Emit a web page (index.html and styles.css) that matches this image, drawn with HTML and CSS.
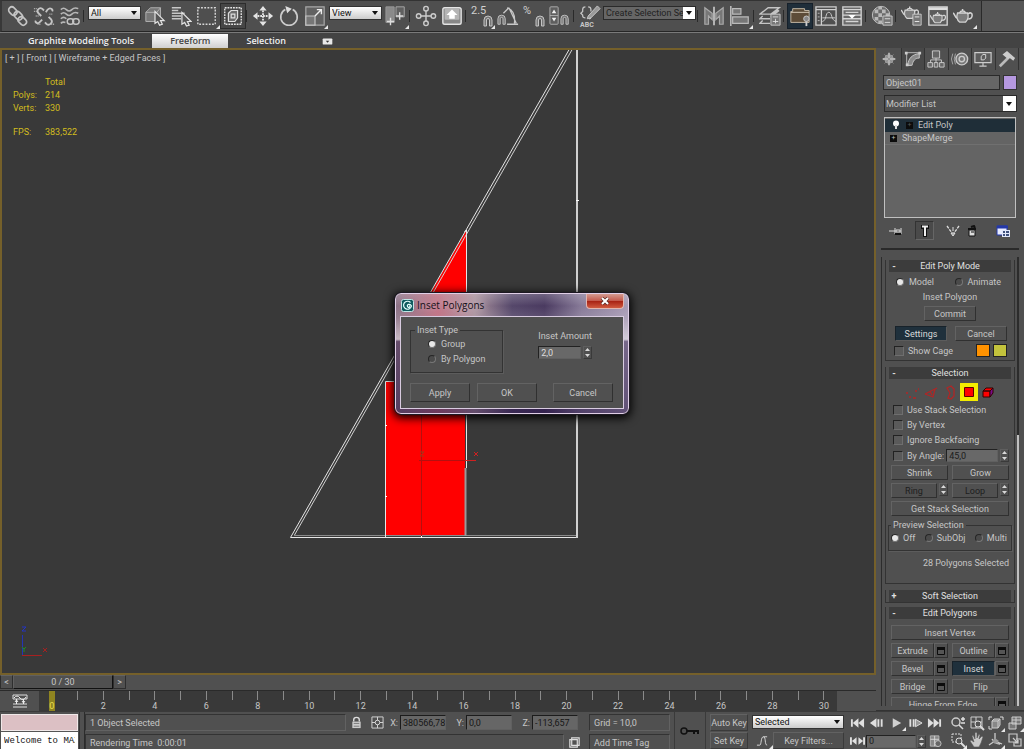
FILE: index.html
```html
<!DOCTYPE html>
<html lang="en">
<head>
    <meta charset="UTF-8">
    <meta name="viewport" content="width=device-width, initial-scale=1.0">
    <title>Inset Polygons</title>
    <link rel="stylesheet" href="styles.css">
</head>
<body>
    <!-- shared icons -->
    <svg class="defs" aria-hidden="true">
        <symbol id="spin" viewBox="0 0 7 11"><path d="M3.500 1 6 4H1zM3.500 10 6 7H1z" fill="#d8d8d8"/></symbol>
        <symbol id="win" viewBox="0 0 10 10"><path d="M1.500 1.500h7v7h-7z" fill="#555" stroke="#0c0c0c"/><path d="M1 1h8v3H1z" fill="#0c0c0c"/></symbol>
        <symbol id="magnet" viewBox="0 0 10 12"><path d="M1 11V5a4 4 0 0 1 8 0v6H6.500V5a1.500 1.500 0 0 0-3 0v6z" fill="#777" stroke="#c4c4c4"/></symbol>
        <symbol id="teapot" viewBox="0 0 20 14"><path d="M4.500 4h10c1 3 1 6-2 9h-6C4 11 3.500 7 4.500 4z" fill="#7c7c7c" stroke="#d4d4d4" stroke-width="1.300"/><path d="M4 9C2 9 2 5 0 4M15 10c3 0 4-2 4-4s-2-3-4-1M6.500 4c1-2.500 5-2.500 6 0M9.500 0v2" fill="none" stroke="#d4d4d4" stroke-width="1.500"/></symbol>
    </svg>

    <div class="app">
        <div class="toolbar">
            <button class="tool" aria-label="Link"><svg viewBox="0 0 24 24"><g fill="none" stroke="#c4c4c4" stroke-width="1.800"><rect x="1" y="3" width="10" height="7" rx="3.500" transform="rotate(45 6 7)"/><rect x="7" y="8" width="10" height="7" rx="3.500" transform="rotate(45 12 12)"/><rect x="12" y="14" width="10" height="7" rx="3.500" transform="rotate(45 17 17)"/></g></svg></button>
            <button class="tool" aria-label="Unlink"><svg viewBox="0 0 24 24"><path d="M12 6l-2-2C7 2 3 6 6 9l3 3M13 19l2 2c3 2 7-2 5-5l-3-3M14 8l2-3c3-3 6 0 5 2M10 16l-3 3c-2 2-5 0-4-2" fill="none" stroke="#c4c4c4" stroke-width="2"/><path d="M1 4h4M1 7h4M3 12h4M18 10h4M5 21h3M20 21h3" stroke="#bbb" stroke-width="1.500" stroke-dasharray="1 1"/></svg></button>
            <button class="tool" aria-label="Bind to Space Warp"><svg viewBox="0 0 24 24"><path d="M2 5q3-3 6 0t6 0t7-1M2 10q3-3 6 0t6 0t7-1M2 15q3-3 6 0M2 20q2-2 5-1" fill="none" stroke="#b8b8b8" stroke-width="1.700"/><g fill="none" stroke="#c4c4c4" stroke-width="1.600"><rect x="9" y="15" width="7" height="6" rx="3"/><rect x="15" y="15" width="7" height="6" rx="3"/></g></svg></button>
            <span class="sep"></span>
            <select class="drop" aria-label="Selection filter"><option>All</option></select>
            <button class="tool" aria-label="Select Object"><svg viewBox="0 0 24 24"><path d="M2 8l5-5h11v10l-4 5H2zM2 8h12v10M14 8l4-5" fill="#777" stroke="#b4b4b4"/><path d="M12 7v13l3-2 2 4 3-1-2-4h4z" fill="#555" stroke="#e4e4e4" stroke-width="1.300"/></svg></button>
            <button class="tool" aria-label="Select by Name"><svg viewBox="0 0 24 24"><path d="M2 3h10M2 6h7M2 9h14M2 12h10M2 15h10" stroke="#c8c8c8" stroke-width="1.600"/><path d="M13 8v13l3-2 2 4 3-1-2-4h4z" fill="#555" stroke="#e4e4e4" stroke-width="1.300"/></svg></button>
            <button class="tool fly" aria-label="Rectangular Selection Region"><svg viewBox="0 0 24 24"><path d="M2 3h19v18H2z" fill="none" stroke="#d8d8d8" stroke-width="1.500" stroke-dasharray="2 1.500"/></svg></button>
            <button class="tool pressed" aria-label="Window Crossing"><svg viewBox="0 0 24 24"><path d="M3 3h18v18H3z" fill="none" stroke="#e4e4e4" stroke-width="1.500" stroke-dasharray="2 1"/><path d="M7 9l3-3h7v8l-3 4H7zM10 10h4v4h-4z" fill="#6b6b6b" stroke="#ddd" stroke-width="1.300"/></svg></button>
            <span class="sep"></span>
            <button class="tool" aria-label="Move"><svg viewBox="0 0 24 24"><path d="M12 1l4 5H8zM12 23l4-5H8zM1 12l5-4v8zM23 12l-5-4v8z" fill="#e4e4e4"/><path d="M12 6v12M6 12h12" stroke="#e4e4e4" stroke-width="2" stroke-dasharray="2 1"/></svg></button>
            <button class="tool" aria-label="Rotate"><svg viewBox="0 0 24 24"><path d="M8 5a9 9 0 1 0 8 0" fill="none" stroke="#ccc" stroke-width="1.800"/><path d="M8 1l7 3-5 5z" fill="#ddd"/></svg></button>
            <button class="tool fly" aria-label="Scale"><svg viewBox="0 0 24 24"><path d="M2 2h20v20H2z" fill="#626262" stroke="#a8a8a8" stroke-width="1.300"/><path d="M2 12h10v10H2z" fill="#777" stroke="#c4c4c4" stroke-width="1.300"/><path d="M12 12l7-7M14 5h5v5" fill="none" stroke="#eee" stroke-width="1.500"/></svg></button>
            <select class="drop" aria-label="Reference coordinate system"><option>View</option></select>
            <button class="tool fly" aria-label="Use Pivot Point Center"><svg viewBox="0 0 24 24"><path d="M1 2h9v17H1z" fill="#8a8a8a" stroke="#999"/><path d="M12 2h9v11h-9z" fill="#606060" stroke="#aaa"/><path d="M6 14v8M2 18h8M16 8v8M12 12h8" stroke="#ddd" stroke-width="1.500"/></svg></button>
            <span class="sep"></span>
            <button class="tool" aria-label="Select and Manipulate"><svg viewBox="0 0 24 24"><path d="M12 5v14M5 12h14" stroke="#ccc" stroke-width="1.500"/><g fill="#555" stroke="#ccc" stroke-width="1.500"><circle cx="12" cy="4" r="2.500"/><circle cx="12" cy="20" r="2.500"/><circle cx="4" cy="12" r="2.500"/><circle cx="20" cy="12" r="2.500"/></g></svg></button>
            <button class="tool" aria-label="Keyboard Shortcut Override"><svg viewBox="0 0 24 24"><rect x="2" y="3" width="20" height="18" rx="2" fill="#888" stroke="#e4e4e4" stroke-width="1.500"/><rect x="4" y="4" width="16" height="12" rx="1" fill="#b4b4b4"/><path d="M12 5l6 6h-3v4H9v-4H6z" fill="#fff"/></svg></button>
            <span class="sep"></span>
            <button class="tool fly num" aria-label="Snaps Toggle"><span>2.5</span><svg class="mag"><use href="#magnet"/></svg></button>
            <button class="tool" aria-label="Angle Snap"><svg viewBox="0 0 24 24"><use href="#magnet" x="0" y="10" width="10" height="12"/><path d="M7 9l6-6M11 3c6 2 9 8 8 17M11 21h12M13 3l8 17" fill="none" stroke="#c8c8c8" stroke-width="1.400"/></svg></button>
            <button class="tool num" aria-label="Percent Snap"><span>%</span><svg class="mag"><use href="#magnet"/></svg></button>
            <button class="tool" aria-label="Spinner Snap"><svg viewBox="0 0 24 24"><rect x="1" y="2" width="9" height="19" rx="1" fill="#5e5e5e" stroke="#b0b0b0"/><path d="M5.500 5L8 9H3zM5.500 18L8 14H3z" fill="#eee"/><path d="M1 11.500h9" stroke="#b0b0b0"/><use href="#magnet" x="12" y="10" width="10" height="12"/></svg></button>
            <span class="sep"></span>
            <button class="tool sets" aria-label="Edit Named Selection Sets"><svg viewBox="0 0 24 24"><path d="M7 2q-3 0-3 3v2l-2 2 2 2v1q0 2 3 2M10 2q3 0 3 3v2M13 11v2q0 2-2 2" fill="none" stroke="#c4c4c4" stroke-width="1.400"/><path d="M10 12l10-11 3 3-10 10-4 1z" fill="#999" stroke="#ccc"/></svg><span>ABC</span></button>
            <div class="combo"><input type="text" value="Create Selection Set" aria-label="Named selection sets"><button aria-label="Open list"></button></div>
            <span class="sep"></span>
            <button class="tool" aria-label="Mirror"><svg viewBox="0 0 24 24"><path d="M12 2v20" stroke="#e4e4e4" stroke-width="1.500"/><path d="M2 3v18h4v-9l4 4v-7zM22 3v18h-4v-9l-4 4v-7z" fill="#777" stroke="#aaa" stroke-width="1.300"/></svg></button>
            <button class="tool fly" aria-label="Align"><svg viewBox="0 0 24 24"><path d="M2 1v22" stroke="#ccc" stroke-width="1.500"/><path d="M4 4h9v6H4zM4 13h17v7H4z" fill="#777" stroke="#bbb" stroke-width="1.300"/></svg></button>
            <span class="sep"></span>
            <button class="tool" aria-label="Layer Manager"><svg viewBox="0 0 24 24"><path d="M1 10l9-7h12l-9 7zM4 12l-3 3h11M4 17l-3 3h11M13 13l9-7M13 11l8-6" fill="none" stroke="#c4c4c4" stroke-width="1.500"/><path d="M13 10h10v12H13z" fill="#777" stroke="#ccc"/><path d="M15 13h6M15 18h6M18 15v5" stroke="#ddd"/></svg></button>
            <span class="sep"></span>
            <button class="tool lit" aria-label="Graphite Modeling Tools"><svg viewBox="0 0 24 24"><path d="M2 7h2V4h13v2h5v13H2z" fill="#5d4c38" stroke="#c8bcaa"/><path d="M2 8h20" stroke="#ddd2c0"/><circle cx="19" cy="15" r="3" fill="#888" stroke="#ccc"/><path d="M19 18v5" stroke="#ccc" stroke-width="2"/></svg></button>
            <button class="tool" aria-label="Curve Editor"><svg viewBox="0 0 24 24"><path d="M1 2h22v20H1zM1 5h22M7 5v17" fill="none" stroke="#d0d0d0" stroke-width="1.400"/><path d="M8 18c5-1 3-10 7-10s2 8 8 10M8 14h14" fill="none" stroke="#d0d0d0"/><path d="M3 9h2M3 13h2M3 17h2" stroke="#bbb"/></svg></button>
            <button class="tool" aria-label="Schematic View"><svg viewBox="0 0 24 24"><path d="M2 2h20v20H2z" fill="#6a6a6a" stroke="#d0d0d0" stroke-width="1.500"/><path d="M2 5h20M5 8h14M2 11h20M2 15h20M5 18h14" fill="none" stroke="#d4d4d4" stroke-width="1.500"/><path d="M8 11h8l-4 4z" fill="#fff"/></svg></button>
            <span class="sep"></span>
            <button class="tool" aria-label="Material Editor"><svg viewBox="0 0 24 24"><circle cx="11" cy="11" r="9.500" fill="#6a6a6a" stroke="#c8c8c8"/><path d="M4 5h4v4H4zM12 5h4v4h-4zM8 9h4v4H8zM16 9h4v4h-4zM4 13h4v4H4zM8 2h4v3H8zM8 17h4v3H8z" fill="#b8b8b8"/><path d="M13 12h10v10H13z" fill="#777" stroke="#ccc"/><path d="M15 15h6M15 19h6" stroke="#ddd"/></svg></button>
            <span class="sep"></span>
            <button class="tool" aria-label="Render Setup"><svg viewBox="0 0 24 24"><use href="#teapot" x="0" y="1" width="20" height="15"/><path d="M13 10h9v12h-9z" fill="#777" stroke="#ccc"/><path d="M15 13h5M15 18h5" stroke="#eee"/></svg></button>
            <button class="tool" aria-label="Rendered Frame Window"><svg viewBox="0 0 24 24"><path d="M2 2h20v20H2z" fill="#5c5c5c" stroke="#d4d4d4" stroke-width="1.500"/><path d="M2 4h20" stroke="#ddd" stroke-width="3"/><use href="#teapot" x="3" y="7" width="18" height="14"/></svg></button>
            <button class="tool fly" aria-label="Render"><svg viewBox="0 0 24 24"><use href="#teapot" x="0" y="4" width="22" height="16"/></svg></button>
            <span class="toolbar-end"></span>
        </div>

        <div class="ribbon">
            <button>Graphite Modeling Tools</button>
            <button class="active">Freeform</button>
            <button>Selection</button>
            <button class="mini" aria-label="Minimize ribbon"><svg viewBox="0 0 12 8"><rect x=".5" y=".5" width="11" height="7" rx="1" fill="#e8e8e8"/><path d="M4 3h4L6 5.500z" fill="#333"/></svg></button>
        </div>

        <div class="main">
            <div class="stage">
                <div class="viewport">
                    <svg class="scene" viewBox="0 48 876 627" preserveAspectRatio="xMinYMin slice">
                        <path d="M466 231V320H415z" fill="#f00"/>
                        <path d="M386 382h79v154h-79z" fill="#f00"/>
                        <g fill="none" stroke="#e6e6e6">
                            <path d="M570 48 290.500 537.500H578"/>
                            <path d="M573 48 294.500 535" stroke="#d0d0d0"/>
                            <path d="M294 535.500H577" stroke="#8a8a8a"/>
                            <path d="M577 48V538" stroke-width="2" stroke="#d0d0d0"/>
                            <path d="M466.500 230V468M385.500 537V381.500H400"/>
                            <path d="M465.500 468V536" stroke="#999" stroke-width="2"/>
                            <path d="M385 425.500h2M385 496.500h2M421.500 536v2M576 200.500h3M466.500 230l-2 2" stroke="#fff"/>
                        </g>
                        <path d="M421.500 382V536M419 460.500h46" stroke="#b51010" fill="none"/>
                        <path d="M465 460.500h11M474 452l4 4M478 452l-4 4" stroke="#d02020" fill="none"/>
                        <path d="M420 452h4l-4 4h4" stroke="#a33a1a" fill="none"/>
                        <path d="M22.500 635V655" stroke="#2434b4"/>
                        <path d="M22 627h4l-4 4h4" stroke="#2434c4" fill="none"/>
                        <path d="M22 655.500H42M43 648l4 4M47 648l-4 4" stroke="#a82020" fill="none"/>
                        <path d="M22 647l2 2 2-2M24 649v3" stroke="#209020" fill="none"/>
                    </svg>
                    <div class="view-label">[ + ] [ Front ] [ Wireframe + Edged Faces ]</div>
                    <table class="stats">
                        <tr><td></td><td>Total</td></tr>
                        <tr><td>Polys:</td><td>214</td></tr>
                        <tr><td>Verts:</td><td>330</td></tr>
                        <tr class="fps"><td>FPS:</td><td>383,522</td></tr>
                    </table>

                    <div class="dialog" role="dialog" aria-label="Inset Polygons">
                        <div class="title">
                            <svg viewBox="0 0 13 13"><rect x=".5" y=".5" width="12" height="12" rx="2" fill="#0e5a5e" stroke="#bfe6e6"/><path d="M9.500 3.500A4 4 0 1 0 10.500 7C9 4 5.500 5.500 6.500 7.500s3 .5 2-1" fill="none" stroke="#e6ffff" stroke-width="1.200"/></svg>
                            <span>Inset Polygons</span>
                            <button class="close" aria-label="Close"><svg viewBox="0 0 10 8"><path d="M2 1l6 6M8 1L2 7" stroke="#5a2a24" stroke-width="3.500"/><path d="M2 1l6 6M8 1L2 7" stroke="#fff" stroke-width="2"/></svg></button>
                        </div>
                        <div class="dialog-body">
                            <div class="dialog-top">
                                <fieldset class="group">
                                    <legend>Inset Type</legend>
                                    <label><input type="radio" name="type" checked>Group</label>
                                    <label><input type="radio" name="type">By Polygon</label>
                                </fieldset>
                                <div class="amount">
                                    <label for="amount">Inset Amount</label>
                                    <div class="spinner"><input type="text" id="amount" value="2,0"><button aria-label="Step"><svg><use href="#spin"/></svg></button></div>
                                </div>
                            </div>
                            <div class="dialog-buttons">
                                <button class="btn">Apply</button>
                                <button class="btn">OK</button>
                                <button class="btn last">Cancel</button>
                            </div>
                        </div>
                    </div>
                </div>

                <div class="time-slider">
                    <button aria-label="Previous frame">&lt;</button>
                    <button class="handle">0 / 30</button>
                    <button aria-label="Next frame">&gt;</button>
                </div>
                <div class="track">
                    <button class="curve" aria-label="Open Mini Curve Editor"><svg viewBox="0 0 16 14"><path d="M1 1h14v4H1zM1 13h14M1 10h14" fill="none" stroke="#ddd"/><path d="M2 4q3-4 6 0t6-1M4.500 5v5M11.500 5v5M3 8l1.500-2L6 8M10 7l1.500 2L13 7" fill="none" stroke="#eee"/></svg></button>
                    <div class="ticks">
                        <span class="now">0</span><span></span><span>2</span><span></span><span>4</span><span></span><span>6</span><span></span><span>8</span><span></span><span>10</span><span></span><span>12</span><span></span><span>14</span><span></span><span>16</span><span></span><span>18</span><span></span><span>20</span><span></span><span>22</span><span></span><span>24</span><span></span><span>26</span><span></span><span>28</span><span></span><span>30</span>
                    </div>
                </div>
            </div>

            <div class="panel">
                <div class="tabs">
                    <button aria-label="Create"><svg viewBox="0 0 20 20"><circle cx="10" cy="10" r="4.500" fill="#999" stroke="#aaa"/><path d="M10 3v14M3 10h14" stroke="#b4b4b4" stroke-width="2"/><path d="M5 5l10 10M15 5L5 15" stroke="#909090"/></svg></button>
                    <button class="on" aria-label="Modify"><svg viewBox="0 0 20 20"><path d="M3 3h14M3 3v14M3 17h5" fill="none" stroke="#c4c4c4"/><path d="M4 17C5 9 9 5 17 4v5c-5 0-7 3-8 8z" fill="#8a8a8a" stroke="#ccc"/><path d="M1 2h3v3H1zM16 2h3v3h-3zM2 15h3v3H2z" fill="#ccc"/></svg></button>
                    <button aria-label="Hierarchy"><svg viewBox="0 0 20 20"><path d="M6 1h8v8H6zM1 14h5v5H1zM8 14h4v5H8zM14 14h5v5h-5z" fill="#666" stroke="#d0d0d0"/><path d="M10 9v5M4 14v-3h12v3" fill="none" stroke="#d0d0d0"/></svg></button>
                    <button aria-label="Motion"><svg viewBox="0 0 20 20"><circle cx="12" cy="10" r="6.500" fill="#777" stroke="#ccc" stroke-width="1.500"/><circle cx="12" cy="10" r="3" fill="none" stroke="#ccc" stroke-width="1.500"/><path d="M5 4q-3 6 0 12M2 4q-3 6 0 12" fill="none" stroke="#aaa"/></svg></button>
                    <button aria-label="Display"><svg viewBox="0 0 20 20"><path d="M1 3h18v11H1zM6 18h8M10 14v4" fill="#5c5c5c" stroke="#ccc" stroke-width="1.300"/><path d="M8 7l2-2h3v4l-2 2H8z" fill="none" stroke="#ddd"/></svg></button>
                    <button aria-label="Utilities"><svg viewBox="0 0 20 20"><path d="M2 18L12 8" stroke="#bbb" stroke-width="3"/><path d="M5 5l5-4 9 8-2 3-4-3-2 1z" fill="#ccc"/></svg></button>
                </div>
                <div class="name-row">
                    <input type="text" value="Object01" aria-label="Object name">
                    <button class="swatch" aria-label="Object color"></button>
                </div>
                <select class="modlist" aria-label="Modifier List"><option>Modifier List</option></select>
                <ul class="stack">
                    <li class="sel"><svg class="bulb" viewBox="0 0 8 10"><circle cx="4" cy="3.500" r="3" fill="#fff"/><path d="M3 5h2v4H3z" fill="#ddd"/></svg><i class="plus">+</i>Edit Poly</li>
                    <li><i class="plus">+</i>ShapeMerge</li>
                </ul>
                <div class="stack-tools">
                    <button aria-label="Pin Stack"><svg viewBox="0 0 14 12"><path d="M0 6h6" stroke="#ddd"/><path d="M6 3v6M7 5h4v2H7zM12 3v6" stroke="#ddd" fill="none"/><path d="M6 8h6v2H6z" fill="#111"/></svg></button>
                    <button class="on" aria-label="Show End Result"><svg viewBox="0 0 14 12"><path d="M3 0h8v4h-2v8H5V4H3z" fill="#111"/><path d="M4 1.500h6M7 2v9" stroke="#eee" stroke-width="2"/></svg></button>
                    <button aria-label="Make Unique"><svg viewBox="0 0 14 12"><path d="M1 1l5 7M13 1L8 8" stroke="#ddd" stroke-width="1.300" stroke-dasharray="3 1"/><path d="M7 2v4M5 8l2 3 2-3z" stroke="#ddd" fill="#999"/></svg></button>
                    <button aria-label="Remove Modifier"><svg viewBox="0 0 14 12"><path d="M4 5h6v6H4z" fill="#ddd" stroke="#111"/><path d="M3 4h8M6 2l3-1 1 2" stroke="#111" stroke-width="2" fill="none"/><path d="M6 7h3" stroke="#111"/></svg></button>
                    <button class="cfg" aria-label="Configure Modifier Sets"><svg viewBox="0 0 14 12"><path d="M1 1h10v9H1z" fill="#e8ecff" stroke="#2438a8"/><path d="M1 2h11" stroke="#2438a8" stroke-width="3"/><path d="M6 5h8v7H6z" fill="#dfe6fa"/><path d="M7 6h2v2H7zM10 6h3v2h-3zM7 9h2v2H7zM10 9h3v2h-3z" fill="#3d4f7c"/></svg></button>
                </div>

                <div class="rollouts">
                    <section class="rollout">
                        <button class="head"><b>-</b>Edit Poly Mode</button>
                        <div class="inner">
                            <div class="pair radios"><label><input type="radio" name="mode" checked>Model</label><label><input type="radio" name="mode">Animate</label></div>
                            <div class="center">Inset Polygon</div>
                            <button class="btn commit">Commit</button>
                            <div class="pair narrow"><button class="btn lit">Settings</button><button class="btn">Cancel</button></div>
                            <div class="cage"><label><input type="checkbox">Show Cage</label><button class="chip orange" aria-label="Cage color"></button><button class="chip olive" aria-label="Selected cage color"></button></div>
                        </div>
                    </section>

                    <section class="rollout selection">
                        <button class="head"><b>-</b>Selection</button>
                        <div class="inner">
                            <div class="subs">
                                <button aria-label="Vertex"><svg viewBox="0 0 18 18"><path d="M3 10h2M6 14h2M10 15h3M12 8h2M15 6h1" stroke="#b02626" stroke-width="1.500"/></svg></button>
                                <button aria-label="Edge"><svg viewBox="0 0 18 18"><path d="M3 11l12-6M3 11l8 3 2-8M8 8l2 4" fill="none" stroke="#b02626" stroke-width="1.300"/></svg></button>
                                <button aria-label="Border"><svg viewBox="0 0 18 18"><path d="M6 5l4-2 3 3v7l-3 3-3-1 2-5z" fill="none" stroke="#b02626" stroke-width="1.300"/></svg></button>
                                <button class="on" aria-label="Polygon"><svg viewBox="0 0 18 18"><path d="M4.500 4.500h9v9h-9z" fill="#f00" stroke="#5a0000"/></svg></button>
                                <button aria-label="Element"><svg viewBox="0 0 18 18"><path d="M4 8l3-3h7l-3 3zM4 8h7v6H4z" fill="#f00" stroke="#300"/><path d="M11 8l3-3v5l-3 4z" fill="#7a0a8a" stroke="#300"/></svg></button>
                            </div>
                            <label class="check"><input type="checkbox">Use Stack Selection</label>
                            <label class="check"><input type="checkbox">By Vertex</label>
                            <label class="check"><input type="checkbox">Ignore Backfacing</label>
                            <div class="angle"><label class="check"><input type="checkbox">By Angle:</label><div class="spinner"><input type="text" value="45,0" aria-label="Angle"><button aria-label="Step"><svg><use href="#spin"/></svg></button></div></div>
                            <div class="pair"><button class="btn">Shrink</button><button class="btn">Grow</button></div>
                            <div class="pair"><div class="spinner"><button class="btn off">Ring</button><button aria-label="Step"><svg><use href="#spin"/></svg></button></div><div class="spinner"><button class="btn off">Loop</button><button aria-label="Step"><svg><use href="#spin"/></svg></button></div></div>
                            <button class="btn">Get Stack Selection</button>
                            <fieldset class="group preview">
                                <legend>Preview Selection</legend>
                                <label><input type="radio" name="prev" checked>Off</label>
                                <label><input type="radio" name="prev">SubObj</label>
                                <label><input type="radio" name="prev">Multi</label>
                            </fieldset>
                            <div class="count">28 Polygons Selected</div>
                        </div>
                    </section>

                    <section class="rollout shut">
                        <button class="head"><b>+</b>Soft Selection</button>
                    </section>

                    <section class="rollout polys">
                        <button class="head"><b>-</b>Edit Polygons</button>
                        <div class="inner">
                            <button class="btn">Insert Vertex</button>
                            <div class="pair"><div class="opt"><button class="btn">Extrude</button><button class="btn box" aria-label="Extrude settings"><svg><use href="#win"/></svg></button></div><div class="opt"><button class="btn">Outline</button><button class="btn box" aria-label="Outline settings"><svg><use href="#win"/></svg></button></div></div>
                            <div class="pair"><div class="opt"><button class="btn">Bevel</button><button class="btn box" aria-label="Bevel settings"><svg><use href="#win"/></svg></button></div><div class="opt"><button class="btn lit">Inset</button><button class="btn box" aria-label="Inset settings"><svg><use href="#win"/></svg></button></div></div>
                            <div class="pair"><div class="opt"><button class="btn">Bridge</button><button class="btn box" aria-label="Bridge settings"><svg><use href="#win"/></svg></button></div><button class="btn">Flip</button></div>
                            <div class="opt"><button class="btn">Hinge From Edge</button><button class="btn box" aria-label="Hinge settings"><svg><use href="#win"/></svg></button></div>
                        </div>
                    </section>
                </div>
            </div>
        </div>

        <div class="status">
            <div class="listener">
                <div class="macro"></div>
                <input type="text" value="Welcome to MAXScript." aria-label="MAXScript listener">
            </div>
            <div class="lines">
                <div class="line coords">
                    <div class="well grow">1 Object Selected</div>
                    <button class="ic" aria-label="Selection Lock"><svg viewBox="0 0 14 14"><path d="M4 6V4q0-2.500 3-2.500T10 4v2" fill="none" stroke="#ddd" stroke-width="1.500"/><path d="M2.500 6h9v7h-9z" fill="#ccc"/><path d="M4 8h6M4 11h6" stroke="#777"/></svg></button>
                    <button class="ic" aria-label="Transform Type-In"><svg viewBox="0 0 14 14"><path d="M1 1h12v12H1zM7 1v12M1 7h12" fill="none" stroke="#d8d8d8"/><circle cx="7" cy="7" r="2.500" fill="#555" stroke="#ddd"/></svg></button>
                    <label class="coord">X:<input type="text" value="380566,78"></label>
                    <label class="coord">Y:<input type="text" value="0,0"></label>
                    <label class="coord">Z:<input type="text" value="-113,657"></label>
                </div>
                <div class="line">
                    <div class="well grow">Rendering Time &nbsp;0:00:01</div>
                    <button class="ic" aria-label="Adaptive Degradation"><svg viewBox="0 0 14 14"><path d="M2 4h8v8H2zM4 2h8v8H4z" fill="none" stroke="#ddd" stroke-width="1.300"/></svg></button>
                </div>
            </div>
            <div class="grid-info">
                <div class="well">Grid = 10,0</div>
                <div class="well">Add Time Tag</div>
            </div>
            <button class="key" aria-label="Set Keys"><svg viewBox="0 0 20 10"><circle cx="4" cy="5" r="3" fill="none" stroke="#111" stroke-width="1.500"/><path d="M7 5h12M14 5v3M18 5v3" stroke="#111" stroke-width="2"/></svg></button>
            <div class="key-mode"><button>Auto Key</button><button>Set Key</button></div>
            <div class="filters">
                <select class="drop" aria-label="Key set"><option>Selected</option></select>
                <div class="line">
                    <button class="ic fly" aria-label="Default tangents"><svg viewBox="0 0 14 14"><path d="M1 12h3c2 0 1-9 4-9s1 9 4 9M8 3h4" fill="none" stroke="#ddd"/></svg></button>
                    <button class="flat">Key Filters...</button>
                </div>
            </div>
            <div class="play">
                <div class="line">
                    <button aria-label="Go to Start"><svg viewBox="0 0 16 12"><path d="M2 2v8" stroke="#e0e0e0" stroke-width="2"/><path d="M9 1v10L3 6zM15 1v10L9 6z" fill="#e0e0e0"/></svg></button>
                    <button aria-label="Previous Frame"><svg viewBox="0 0 16 12"><path d="M8 1v10L1 6z" fill="#e0e0e0"/><path d="M10 2v8M13.500 2v8" stroke="#e0e0e0" stroke-width="2"/></svg></button>
                    <button class="fly" aria-label="Play"><svg viewBox="0 0 16 12"><path d="M4 1v10l9-5z" fill="#d0d0d0"/></svg></button>
                    <button aria-label="Next Frame"><svg viewBox="0 0 16 12"><path d="M8 2v8l7-4z" fill="#999" stroke="#e0e0e0"/><path d="M2.500 2v8M6 2v8" stroke="#e0e0e0" stroke-width="2"/></svg></button>
                    <button aria-label="Go to End"><svg viewBox="0 0 16 12"><path d="M14 2v8" stroke="#e0e0e0" stroke-width="2"/><path d="M1 1v10l6-5zM7 1v10l6-5z" fill="#e0e0e0"/></svg></button>
                </div>
                <div class="line">
                    <button aria-label="Key Mode"><svg viewBox="0 0 16 12"><path d="M1 2v8M15 2v8" stroke="#e0e0e0" stroke-width="2"/><path d="M7 2v8L2 6zM9 2v8l5-4z" fill="#e0e0e0"/></svg></button>
                    <div class="spinner frame"><input type="text" value="0" aria-label="Current frame"><button aria-label="Step"><svg><use href="#spin"/></svg></button></div>
                    <button aria-label="Time Configuration"><svg viewBox="0 0 16 14"><path d="M2 1h10v12H2z" fill="#888" stroke="#bbb"/><path d="M2 5h10M7 1v12" stroke="#ddd"/><circle cx="11" cy="10" r="3.500" fill="#666" stroke="#ccc"/></svg></button>
                </div>
            </div>
            <div class="nav">
                <button aria-label="Zoom"><svg viewBox="0 0 16 16"><circle cx="6" cy="7" r="4" fill="none" stroke="#ccc" stroke-width="1.500"/><path d="M9 10l4 4M11 4h4M13 2v4M11 8h4" stroke="#ddd" stroke-width="1.500"/></svg></button>
                <button aria-label="Zoom All"><svg viewBox="0 0 16 16"><path d="M2 2h11v11H2zM2 7h11M7 2v11" fill="none" stroke="#ccc"/><circle cx="9" cy="9" r="3" fill="#555" stroke="#ddd"/><path d="M11 11l4 4" stroke="#ddd" stroke-width="2"/></svg></button>
                <button class="fly" aria-label="Zoom Extents"><svg viewBox="0 0 16 16"><path d="M1 5V2h3M12 2h3v3M1 11v3h3" fill="none" stroke="#ddd"/><path d="M4 6l2-2h6v6l-2 3H4zM4 6h6v7M10 6l2-2" fill="#888" stroke="#ccc"/></svg></button>
                <button class="fly" aria-label="Zoom Extents All"><svg viewBox="0 0 16 16"><path d="M5 2h9v7H5zM9 2v7M5 5h9M2 8h7v6H2z" fill="#777" stroke="#ccc"/></svg></button>
                <button class="fly" aria-label="Zoom Region"><svg viewBox="0 0 16 16"><path d="M2 2h9v8H2z" fill="none" stroke="#ddd" stroke-dasharray="2 1"/><circle cx="9" cy="9" r="3" fill="#555" stroke="#ddd"/><path d="M11 11l4 4" stroke="#ddd" stroke-width="2"/></svg></button>
                <button aria-label="Pan"><svg viewBox="0 0 16 16"><path d="M5 15L1 9l1-1 3 2-2-6 1-1 2 4V1l1-1 1 1v5l2-4 1 1-1 4 3-3 1 1-2 6-2 4z" fill="#c8c8c8" stroke="#555" stroke-width=".6"/></svg></button>
                <button class="fly" aria-label="Orbit"><svg viewBox="0 0 16 16"><path d="M7 1v8l-6 4M7 9l7 3M4 7q3 5 8 5" fill="none" stroke="#ccc" stroke-width="1.300"/><path d="M7 6l4 3-4 3-3-3z" fill="#999"/></svg></button>
                <button aria-label="Maximize Viewport"><svg viewBox="0 0 16 16"><path d="M2 2h8v8H2zM9 7h5v7H7v-4M6 6l5 5M11 8v3H8" fill="none" stroke="#ccc" stroke-width="1.200"/></svg></button>
            </div>
        </div>
    </div>
</body>
</html>
```
FILE: styles.css
```css
* {
    box-sizing: border-box;
}
body {
    margin: 0;
    background: #505050;
    color: #c6c6c6;
    font-family: Roboto, "Liberation Sans", sans-serif;
    font-size: 9px;
    line-height: 12px;
}
button, input, select {
    margin: 0;
    padding: 0;
    border: 0;
    border-radius: 0;
    background: none;
    color: inherit;
    font: inherit;
    appearance: none;
    min-width: 0;
}
svg {
    display: block;
}
.defs {
    position: absolute;
    width: 0;
    height: 0;
}
.app {
    height: 100vh;
    display: flex;
    flex-direction: column;
    overflow: hidden;
}

/* main toolbar */
.toolbar {
    display: flex;
    align-items: center;
    height: 32px;
    padding-left: 3px;
    background: #4f4f4f;
    border-top: 1px solid #333;
    border-bottom: 1px solid #262626;
    border-left: 2px solid #383838;
}
.toolbar-end {
    align-self: stretch;
    flex: 1;
    margin-left: 4px;
    border-left: 1px solid #2a2a2a;
    background: #565656;
}
.tool {
    position: relative;
    flex: none;
    width: 26px;
    height: 26px;
    padding: 2px;
}
.tool svg {
    width: 22px;
    height: 22px;
}
.tool.pressed {
    background: #464646;
    border: 1px solid #2c2c2c;
    padding: 1px;
}
.tool.lit {
    background: #1f2e3a;
    border: 1px solid #16202a;
    padding: 1px;
}
.fly {
    position: relative;
}
.fly::after {
    content: "";
    position: absolute;
    right: 0;
    bottom: 0;
    border-left: 4px solid transparent;
    border-bottom: 4px solid #e8e8e8;
}
.num {
    font-size: 11px;
    color: #d0d0d0;
}
.num span {
    display: block;
    height: 10px;
    line-height: 11px;
    text-align: left;
}
.tool .mag {
    width: 10px;
    height: 12px;
    margin-left: 12px;
}
.sets span {
    position: absolute;
    left: 3px;
    bottom: 0;
    font-size: 7px;
    line-height: 7px;
    font-weight: bold;
}
.sep {
    flex: none;
    width: 4px;
    height: 12px;
    border-left: 1px solid #2a2a2a;
}
.drop {
    flex: none;
    width: 53px;
    height: 14px;
    margin: 0 1px;
    padding-left: 2px;
    border: 1px solid #333;
    color: #111;
    background: url("data:image/svg+xml,%3Csvg xmlns='http://www.w3.org/2000/svg' width='6' height='4'%3E%3Cpath d='M0 0h6L3 4z' fill='%23111'/%3E%3C/svg%3E") no-repeat right 3px center, linear-gradient(#fff, #ccc);
}
.toolbar .drop {
    margin-bottom: 6px;
}
.combo {
    display: flex;
    width: 93px;
    height: 14px;
    margin: 0 1px 6px 0;
    border: 1px solid #2a2a2a;
    background: #666;
    color: #222;
}
.combo input {
    flex: 1;
    padding-left: 2px;
}
.combo button {
    width: 12px;
    background: #fff url("data:image/svg+xml,%3Csvg xmlns='http://www.w3.org/2000/svg' width='6' height='4'%3E%3Cpath d='M0 0h6L3 4z' fill='%23111'/%3E%3C/svg%3E") no-repeat center;
}

/* ribbon */
.ribbon {
    display: flex;
    align-items: center;
    height: 16px;
    padding: 1px 0 0 10px;
    background: #434343;
    border-top: 1px solid #7a7a7a;
    font-family: "Open Sans", sans-serif;
    font-weight: 600;
    color: #f0f0f0;
}
.ribbon button {
    height: 14px;
    padding: 0 18px;
}
.ribbon .active {
    background: linear-gradient(#fff, #d0d0d0);
    color: #444;
}
.ribbon .mini svg {
    width: 11px;
    height: 7px;
}

/* viewport */
.main {
    flex: 1;
    display: flex;
    min-height: 0;
}
.stage {
    flex: 1;
    display: flex;
    flex-direction: column;
    min-width: 0;
}
.viewport {
    position: relative;
    flex: 1;
    min-height: 0;
    overflow: hidden;
    background: #393939;
}
.viewport::after {
    content: "";
    position: absolute;
    inset: 0;
    border: 2px solid #75602a;
    pointer-events: none;
}
.scene {
    position: absolute;
    left: 0;
    top: 0;
    width: 100%;
    height: 100%;
}
.view-label {
    position: absolute;
    left: 5px;
    top: 4px;
}
.stats {
    position: absolute;
    left: 13px;
    top: 27px;
    border-collapse: collapse;
    color: #d2bc1e;
}
.stats td {
    height: 13px;
    padding: 0;
    min-width: 32px;
}
.stats .fps td {
    padding-top: 12px;
}

/* inset dialog */
.dialog {
    position: absolute;
    left: 395px;
    top: 245px;
    width: 234px;
    padding: 0 4px 4px;
    border: 1px solid #e0cfe6;
    border-radius: 6px;
    outline: 1px solid #1c1822;
    box-shadow: 0 2px 10px 2px #000;
    color: #c6c6c6;
    background:
        linear-gradient(to bottom, rgba(255, 255, 255, .2), rgba(255, 255, 255, 0) 10%, rgba(255, 255, 255, .1) 20%, rgba(255, 255, 255, .5) 38%, rgba(30, 10, 60, .35) 40%, rgba(30, 10, 60, .5)),
        linear-gradient(to right, #8a7286, #bd6b7f 18%, #a8909c 34%, #55476a 50%, #4a3a60 64%, #877a98 80%, #a79ab4);
}
.title {
    display: flex;
    align-items: center;
    height: 22px;
    gap: 3px;
    padding-left: 1px;
    color: #161018;
    font-family: "Open Sans", sans-serif;
    font-size: 10px;
}
.title svg {
    width: 13px;
    height: 13px;
}
.title span {
    flex: 1;
    text-shadow: 0 0 6px #e8d8e0;
}
.close {
    align-self: flex-start;
    display: grid;
    place-items: center;
    width: 38px;
    height: 15px;
    border: 1px solid #e2b6b0;
    border-top: 0;
    border-radius: 0 0 4px 4px;
    background: linear-gradient(#d49a90, #c2574a 50%, #a82214 52%, #d05a40);
}
.close svg {
    width: 10px;
    height: 8px;
}
.dialog-body {
    padding: 7px 10px 6px 9px;
    border: 1px solid #d8cbe0;
    background: #505050;
}
.dialog-top {
    display: flex;
    justify-content: space-between;
    padding-right: 21px;
}
.group {
    min-width: 0;
    margin: 0;
    padding: 0 4px 4px;
    border: 1px solid #333;
    box-shadow: 1px 1px #5c5c5c;
}
.group legend {
    padding: 0 2px;
}
.dialog .group {
    width: 93px;
    height: 49px;
}
.dialog .group label {
    display: flex;
    align-items: center;
    height: 15px;
    padding-left: 13px;
}
input[type=radio] {
    flex: none;
    width: 8px;
    height: 8px;
    margin-right: 5px;
    border: 1px solid #262626;
    border-right-color: #777;
    border-bottom-color: #777;
    border-radius: 50%;
    background: #4a4a4a;
}
input[type=radio]:checked {
    background: #e8e8e8;
}
input[type=checkbox] {
    flex: none;
    width: 10px;
    height: 10px;
    margin-right: 4px;
    border: 1px solid #6e6e6e;
    border-top-color: #222;
    border-left-color: #222;
    background: #5a5a5a;
}
.amount {
    display: flex;
    flex-direction: column;
    gap: 4px;
    padding-top: 6px;
}
.spinner {
    display: flex;
    flex: 1;
    gap: 2px;
}
.spinner input {
    flex: 1;
    width: 0;
    height: 13px;
    padding-left: 2px;
    border: 1px solid #606060;
    border-top-color: #222;
    border-left-color: #222;
    background: #686868;
    color: #1c1c1c;
}
.amount .spinner input {
    color: #ddd;
}
.spinner > button:last-child {
    flex: none;
    width: 9px;
    height: 13px;
    border: 1px solid #3a3a3a;
    border-top-color: #5e5e5e;
    border-left-color: #5e5e5e;
}
.spinner > button svg {
    width: 7px;
    height: 11px;
}
.dialog-buttons {
    display: flex;
    gap: 7px;
    padding-top: 10px;
}
.btn {
    display: block;
    flex: 1;
    height: 15px;
    border: 1px solid #303030;
    border-top-color: #636363;
    border-left-color: #636363;
    line-height: 12px;
    text-align: center;
}
.inner > .btn {
    flex: none;
}
.btn.lit {
    background: #1f303c;
    border-color: #18222a #5c5c5c #5c5c5c #18222a;
    color: #d8d8d8;
}
.btn.off {
    color: #1e1e1e;
}
.dialog-buttons .btn {
    flex: none;
    width: 60px;
    height: 19px;
}
.dialog-buttons .last {
    margin-left: auto;
}

/* time slider and track bar */
.time-slider {
    display: flex;
    height: 15px;
    background: #505050;
}
.time-slider button {
    width: 13px;
    height: 14px;
    border: 1px solid #2e2e2e;
    border-top-color: #636363;
}
.time-slider .handle {
    width: 100px;
    border-color: #606060 #111 #111 #606060;
}
.track {
    display: flex;
    height: 21px;
    padding-right: 39px;
    border-top: 1px solid #2a2a2a;
}
.curve {
    display: grid;
    place-items: center;
    width: 39px;
}
.curve svg {
    width: 16px;
    height: 14px;
}
.ticks {
    flex: 1;
    display: flex;
    background: #393939;
}
.ticks span {
    flex: 1;
    padding-top: 9px;
    text-align: center;
    background: linear-gradient(#8a8a8a, #8a8a8a) no-repeat center top / 1px 9px;
}
.ticks .now {
    background: linear-gradient(#8f8420, #8f8420) no-repeat center top / 6px 20px;
    color: #e8dc50;
}

/* command panel */
.panel {
    flex: none;
    display: flex;
    flex-direction: column;
    width: 148px;
    min-height: 0;
    padding: 0 5px 4px;
    border-bottom: 1px solid #333;
}
.tabs {
    display: flex;
    height: 22px;
    margin-left: -3px;
}
.tabs button {
    flex: 1;
    display: grid;
    place-items: center;
    border-right: 1px solid #333;
}
.tabs .on {
    background: #484848;
}
.tabs svg {
    width: 18px;
    height: 18px;
}
.name-row {
    display: flex;
    gap: 3px;
    margin: 5px 2px 5px 2px;
}
.name-row input {
    flex: 1;
    height: 15px;
    padding-left: 2px;
    border: 1px solid #2a2a2a;
    background: #666;
}
.swatch {
    width: 14px;
    height: 15px;
    border: 1px solid #333;
    background: #b598e0;
}
.modlist {
    height: 17px;
    margin: 0 2px 5px 3px;
    padding-left: 1px;
    border: 1px solid #2a2a2a;
    background: url("data:image/svg+xml,%3Csvg xmlns='http://www.w3.org/2000/svg' width='6' height='4'%3E%3Cpath d='M0 0h6L3 4z' fill='%23111'/%3E%3C/svg%3E") no-repeat right 4px center, linear-gradient(#fff, #fff) no-repeat right / 13px 100%, #505050;
}
.stack {
    height: 101px;
    margin: 0 3px;
    padding: 1px 0;
    border: 1px solid #c0c0c0;
    background: #646464;
    list-style: none;
}
.stack li {
    display: flex;
    align-items: center;
    gap: 5px;
    height: 13px;
    padding-left: 5px;
    border-bottom: 1px solid #707070;
}
.stack .sel {
    padding-left: 7px;
    background: #1f2e38;
    border-color: #1f2e38;
}
.bulb {
    width: 8px;
    height: 10px;
}
.plus {
    width: 7px;
    height: 7px;
    background: #0c0c0c;
    color: #bbb;
    font-size: 7px;
    line-height: 7px;
    text-align: center;
    font-style: normal;
}
.sel .plus {
    margin-left: 1px;
    color: #555;
}
.stack-tools {
    display: flex;
    height: 19px;
    margin-top: 3px;
    padding: 0 7px 0 5px;
}
.stack-tools button {
    display: grid;
    place-items: center;
    width: 19px;
    border: 1px solid transparent;
}
.stack-tools .on {
    margin: 0 9px 0 10px;
    border-color: #333 #666 #666 #333;
    background: #4a4a4a;
}
.stack-tools .cfg {
    margin-left: auto;
}
.stack-tools svg {
    width: 14px;
    height: 12px;
}
.rollouts {
    flex: 1;
    min-height: 0;
    margin-top: 8px;
    padding: 10px 4px 0;
    overflow: hidden;
    border-top: 2px solid #2a2a2a;
    background:
        linear-gradient(#2c2c2c, #2c2c2c) no-repeat left 7px / 1px 100%,
        linear-gradient(#2c2c2c 178px, #c0c0c0 178px) no-repeat right 7px / 2px 100%;
}
.rollout {
    margin: 0 0 6px;
    padding: 0 3px 3px;
    border: 1px solid #333;
    border-top: 0;
}
.rollout .head {
    display: block;
    width: 100%;
    height: 12px;
    padding: 0 8px 0 2px;
    background: #3c3c3c;
    color: #e0e0e0;
    text-align: center;
}
.head b {
    float: left;
    width: 6px;
}
.inner {
    display: flex;
    flex-direction: column;
    gap: 3px;
    padding: 4px 2px 0;
}
.inner > * {
    flex: none;
}
.inner label {
    display: flex;
    align-items: center;
    white-space: nowrap;
}
.center {
    text-align: center;
}
.pair {
    display: grid;
    grid-template-columns: 1fr 1fr;
    gap: 4px;
}
.narrow {
    gap: 8px;
    padding: 2px 2px 0 4px;
}
.radios {
    padding-left: 5px;
}
.commit {
    align-self: center;
    width: 52px;
}
.cage {
    display: flex;
    align-items: center;
    gap: 3px;
    padding: 0 2px 0 3px;
}
.cage label {
    flex: 1;
}
.chip {
    width: 14px;
    height: 13px;
    border: 1px solid #222;
}
.orange {
    background: #ff9200;
}
.olive {
    background: #c2c23c;
}
.selection {
    height: 217px;
}
.subs {
    display: flex;
    justify-content: center;
    gap: 1px;
    height: 18px;
}
.subs button {
    width: 18px;
    height: 18px;
}
.subs .on {
    background: #f4ec00;
}
.subs svg {
    width: 18px;
    height: 18px;
}
.check {
    padding-left: 2px;
}
.angle {
    display: flex;
    align-items: center;
    gap: 2px;
}
.preview {
    display: flex;
    justify-content: space-between;
    margin: 0 -3px 3px;
    padding: 1px 4px 6px 2px;
}
.preview label input {
    margin-right: 4px;
}
.count {
    text-align: right;
}
.shut {
    padding-bottom: 0;
    margin-bottom: 4px;
}
.polys .inner {
    padding-top: 6px;
}
.opt {
    display: flex;
}
.box {
    flex: none;
    width: 14px;
    padding: 1px;
}
.box svg {
    width: 10px;
    height: 10px;
}

/* status bar */
.status {
    display: flex;
    height: 38px;
    gap: 4px;
    border-top: 1px solid #3a3a3a;
}
.listener {
    width: 80px;
    padding: 2px 1px 0;
    border-right: 1px solid #333;
}
.macro {
    height: 17px;
    border: 1px solid #f0e8e8;
    background: #dcc0c4;
}
.listener input {
    width: 100%;
    height: 18px;
    padding: 0 3px;
    border-top: 1px solid #555;
    background: #fff;
    color: #111;
    font-family: "Liberation Mono", monospace;
}
.lines {
    flex: 1;
    display: flex;
    flex-direction: column;
    gap: 3px;
    padding-top: 2px;
    border-left: 1px solid #2c2c2c;
}
.line {
    display: flex;
    align-items: center;
}
.coords {
    padding-right: 7px;
}
.well {
    height: 17px;
    padding: 2px 4px;
    border: 1px solid #626262;
    border-top-color: #333;
    border-left-color: #333;
    white-space: nowrap;
}
.grow {
    flex: 1;
}
.ic {
    display: grid;
    place-items: center;
    width: 21px;
    height: 16px;
}
.ic svg {
    width: 13px;
    height: 13px;
}
.coord {
    display: flex;
    align-items: center;
    width: 66px;
    justify-content: flex-end;
    gap: 2px;
}
.ic + .coord {
    width: 58px;
}
.coord input {
    width: 46px;
    height: 15px;
    padding-left: 2px;
    border: 1px solid #606060;
    border-top-color: #1c1c1c;
    border-left-color: #1c1c1c;
    background: #666;
    color: #161616;
}
.grid-info {
    display: flex;
    flex-direction: column;
    gap: 3px;
    width: 81px;
    padding-top: 2px;
}
.key {
    display: grid;
    place-items: center;
    width: 32px;
    border-left: 1px solid #3a3a3a;
    border-right: 1px solid #3a3a3a;
}
.key svg {
    width: 20px;
    height: 10px;
}
.key-mode {
    display: flex;
    flex-direction: column;
    gap: 1px;
    width: 38px;
    padding-top: 2px;
}
.key-mode button, .flat {
    height: 17px;
    border: 1px solid #3a3a3a;
    border-top-color: #626262;
    border-left-color: #626262;
    white-space: nowrap;
}
.filters {
    display: flex;
    flex-direction: column;
    gap: 3px;
    width: 92px;
    padding-top: 3px;
}
.filters .drop {
    width: auto;
    margin: 0;
}
.flat {
    flex: 1;
}
.play {
    width: 96px;
    padding-top: 2px;
}
.play .line {
    height: 18px;
}
.play .line > button {
    flex: 1;
    display: grid;
    place-items: center;
    height: 16px;
}
.play .line > button svg {
    width: 15px;
    height: 12px;
}
.frame {
    flex: none;
    width: 60px;
    gap: 1px;
}
.nav {
    display: grid;
    grid-template-columns: repeat(4, 1fr);
    width: 76px;
    padding-top: 2px;
}
.nav button {
    display: grid;
    place-items: center;
}
.nav svg {
    width: 16px;
    height: 16px;
}
```
